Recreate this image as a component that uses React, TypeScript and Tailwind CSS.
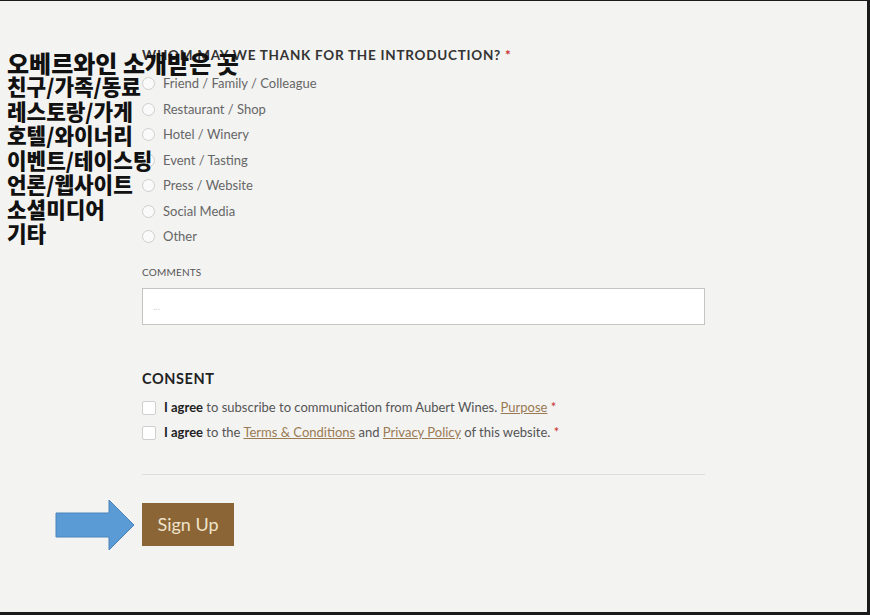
import React from 'react';

export default function App() {
  const sources = ['Friend / Family / Colleague', 'Restaurant / Shop', 'Hotel / Winery', 'Event / Tasting', 'Press / Website', 'Social Media', 'Other'];
  const koLines = ['친구/가족/동료', '레스토랑/가게', '호텔/와이너리', '이벤트/테이스팅', '언론/웹사이트', '소셜미디어', '기타'];
  return <div className="relative w-[870px] h-[615px] bg-[#f3f3f2] border-t border-r-[3px] border-b-[3px] border-[#1b1b1b] overflow-hidden font-['Lato',sans-serif]">
      <div className="ml-[142px] w-[563px] pt-[46px]">
        {/* question */}
        <h2 className="text-[13.5px] leading-[16px] font-bold tracking-[0.055em] text-[#333]">
          WHOM MAY WE THANK FOR THE INTRODUCTION? <span className="text-[#c9302c]">*</span>
        </h2>
        <div className="mt-[8px]">
          {sources.map(s => <label key={s} className="flex items-center gap-[8px] h-[25.5px]">
              <span className="w-[13px] h-[13px] rounded-full border border-[#cfcfcf] bg-[#fafafa]"></span>
              <span className="text-[13px] text-[#666]">{s}</span>
            </label>)}
        </div>

        {/* comments */}
        <div className="mt-[16px] text-[10px] leading-[12px] text-[#555] tracking-[0.02em]">COMMENTS</div>
        <div className="mt-[10px] h-[37px] bg-white border-[1.5px] border-[#c4c4c4] flex items-center px-[10px]">
          <span className="text-[10px] text-[#cfcfcf]">...</span>
        </div>

        {/* consent */}
        <h3 className="mt-[45px] text-[14.5px] leading-[18px] font-bold tracking-[0.04em] text-[#222]">CONSENT</h3>
        <div className="mt-[8px]">
          <div className="flex items-center gap-[8px] h-[25px]">
            <span className="w-[14px] h-[14px] rounded-[2px] border border-[#cfcfcf] bg-white"></span>
            <span className="text-[13px] text-[#555]">
              <b className="text-[#222]">I agree</b> to subscribe to communication from Aubert Wines. <span className="underline text-[#9a7a52]">Purpose</span> <span className="text-[#c9302c]">*</span>
            </span>
          </div>
          <div className="flex items-center gap-[8px] h-[25px]">
            <span className="w-[14px] h-[14px] rounded-[2px] border border-[#cfcfcf] bg-white"></span>
            <span className="text-[13px] text-[#555]">
              <b className="text-[#222]">I agree</b> to the <span className="underline text-[#9a7a52]">Terms &amp; Conditions</span> and <span className="underline text-[#9a7a52]">Privacy Policy</span> of this website. <span className="text-[#c9302c]">*</span>
            </span>
          </div>
        </div>

        <div className="mt-[28px] h-px bg-[#dedede]"></div>

        {/* submit */}
        <div className="mt-[24px] -ml-[87px] flex items-center gap-[7px]">
          <svg width="80" height="52" viewBox="0 0 80 52">
            <polygon points="1,14 54,14 54,1 79,26 54,51 54,38 1,38" fill="#5b9bd5" stroke="#4a84bb" strokeWidth="1" />
          </svg>
          <button className="w-[92px] h-[43px] bg-[#8b6535] text-[#efe3cc] text-[18px] font-['Lato',sans-serif]">Sign Up</button>
        </div>
      </div>

      {/* Korean annotation overlay */}
      <div className="absolute left-[7px] top-[51px] font-['Noto_Sans_CJK_KR',sans-serif] font-black text-[#111]">
        <div className="text-[24px] leading-[22px]">오베르와인 소개받은 곳</div>
        {koLines.map(l => <div key={l} className="text-[21.3px] leading-[24.5px]">{l}</div>)}
      </div>
    </div>;
}
